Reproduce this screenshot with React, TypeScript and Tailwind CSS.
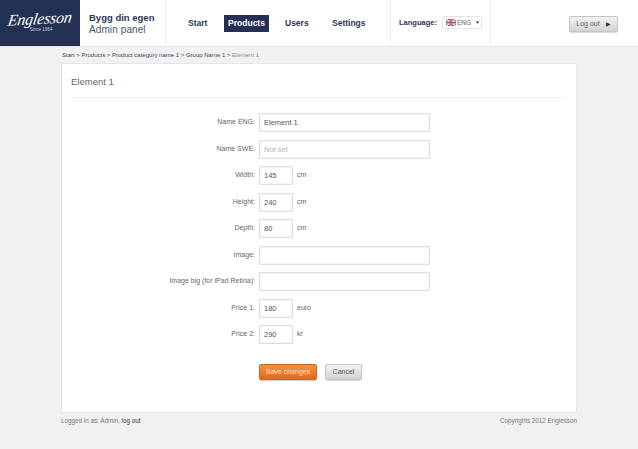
import React from 'react';

const sans = "font-['Liberation_Sans',Arial,sans-serif]";

const rows = [
  { label: 'Name ENG:', value: 'Element 1', wide: true },
  { label: 'Name SWE:', placeholder: 'Not set', wide: true },
  { label: 'Width:', value: '145', unit: 'cm' },
  { label: 'Height:', value: '240', unit: 'cm' },
  { label: 'Depth:', value: '80', unit: 'cm' },
  { label: 'Image:', value: '', wide: true },
  { label: 'Image big (for iPad Retina):', value: '', wide: true },
  { label: 'Price 1:', value: '180', unit: 'euro' },
  { label: 'Price 2:', value: '290', unit: 'kr' },
];

function Flag() {
  return (
    <svg width="10" height="7" viewBox="0 0 20 14" className="shrink-0">
      <rect width="20" height="14" fill="#3f4f8c" />
      <path d="M0 0L20 14M20 0L0 14" stroke="#f3dfe3" strokeWidth="3" />
      <path d="M10 0V14M0 7H20" stroke="#f3dfe3" strokeWidth="5" />
      <path d="M10 0V14M0 7H20" stroke="#c9455f" strokeWidth="3" />
    </svg>
  );
}

function Logo() {
  return (
    <div className="w-[80px] h-full shrink-0 bg-[#243155] flex flex-col items-center justify-center text-white">
      <span className="font-['Liberation_Serif',serif] italic text-[16px] leading-[15px] -skew-x-12 -rotate-3 tracking-[-0.2px] mt-[-3px]">
        Englesson
      </span>
      <span className={`${sans} text-[4.5px] leading-[5px] text-[#c8ccd8] ml-[2px] mt-[1px]`}>Since 1964</span>
    </div>
  );
}

export default function App() {
  return (
    <div className={`${sans} w-[638px] h-[449px] bg-[#f1f1f1] overflow-hidden flex flex-col`}>
      {/* Header */}
      <div className="h-[47px] shrink-0 bg-white border-b border-[#e6e6e6] flex">
        <Logo />
        <div className="w-[86px] shrink-0 border-r border-[#f0f0f0] pl-[9px] pt-[12px]">
          <div className="text-[9.5px] leading-[12px] font-bold text-[#2b3556]">Bygg din egen</div>
          <div className="text-[10px] leading-[12px] text-[#4a5268] tracking-[0.1px]">Admin panel</div>
        </div>
        <div className="w-[225px] shrink-0 border-r border-[#f0f0f0] flex items-start pt-[15px] pl-[22px] text-[8.5px] font-bold text-[#2b3556]">
          <span className="leading-[17px] w-[36px]">Start</span>
          <span className="leading-[15px] w-[45px] text-center bg-[#243155] text-white border border-[#243155]">Products</span>
          <span className="leading-[17px] w-[47px] ml-[16px]">Users</span>
          <span className="leading-[17px]">Settings</span>
        </div>
        <div className="w-[100px] shrink-0 border-r border-[#f0f0f0] flex items-center pl-[8px] gap-[5px] pb-[1px]">
          <span className="text-[7.5px] font-bold text-[#2b3556]">Language:</span>
          <span className="w-[40px] h-[13px] bg-white border border-[#e4e4e4] rounded-[2px] flex items-center gap-[1px] pl-[3px] text-[6.5px] text-[#666]">
            <Flag />
            ENG
            <span className="ml-[3px] text-[5px] text-[#444]">▼</span>
          </span>
        </div>
        <div className="flex-1 flex justify-end items-start pt-[16px] pr-[20px]">
          <button className="w-[49px] h-[16px] rounded-[2px] border border-[#c4c4c4] bg-gradient-to-b from-[#f2f2f2] to-[#d4d4d4] flex items-center justify-center gap-[6px] text-[7px] text-[#666] shadow-[0_1px_1px_rgba(0,0,0,0.15)]">
            Log out
            <span className="text-[6px] text-[#333]">▶</span>
          </button>
        </div>
      </div>

      {/* Content column */}
      <div className="w-[516px] ml-[61px] flex flex-col">
        <div className="h-[16px] flex items-center pl-[1px] text-[6px] text-[#3a4260] whitespace-nowrap">
          Start &gt; Products &gt; Product category name 1 &gt; Group Name 1 &gt;&nbsp;
          <span className="text-[#8a8f9c]">Element 1</span>
        </div>

        <div className="h-[350px] bg-white border border-[#e6e6e6] rounded-[2px] px-[9px]">
          <div className="text-[9.5px] leading-[12px] text-[#666] pt-[12px] h-[34px] border-b border-[#f0f0f0] mr-[2px]">
            Element 1
          </div>

          <div className="flex flex-col gap-[7.5px] pt-[15px]">
            {rows.map((r) => (
              <div key={r.label} className="flex items-center h-[19px]">
                <div className="w-[188px] shrink-0 pr-[4px] text-right text-[7px] text-[#666] whitespace-nowrap">{r.label}</div>
                <input
                  readOnly
                  value={r.value ?? ''}
                  placeholder={r.placeholder}
                  className={`${r.wide ? 'w-[171px]' : 'w-[34px]'} h-[19px] bg-white border border-[#dedede] rounded-[1px] px-[4px] text-[7.5px] text-[#555] shadow-[inset_0_0_0_1px_#f5f5f5] placeholder:italic placeholder:text-[#b0b0b0] outline-none`}
                />
                {r.unit && <span className="ml-[4px] text-[7px] text-[#666]">{r.unit}</span>}
              </div>
            ))}
          </div>

          <div className="flex items-center gap-[8px] pl-[188px] pt-[20px]">
            <button className="w-[58px] h-[16px] rounded-[2px] border border-[#c9661f] bg-gradient-to-b from-[#f58f3f] to-[#e26a1c] text-[7px] text-[#fbe3cf] shadow-[0_1px_1px_rgba(0,0,0,0.2)]">
              Save changes
            </button>
            <button className="w-[37px] h-[16px] rounded-[2px] border border-[#c4c4c4] bg-gradient-to-b from-[#f2f2f2] to-[#d4d4d4] text-[7px] text-[#555] shadow-[0_1px_1px_rgba(0,0,0,0.15)]">
              Cancel
            </button>
          </div>
        </div>

        <div className="flex justify-between pt-[3px] text-[6.3px] leading-[10px] text-[#777]">
          <span>
            Logged in as: Admin, <span className="text-[#2b3556]">log out</span>
          </span>
          <span>Copyrights 2012 Englesson</span>
        </div>
      </div>
    </div>
  );
}
